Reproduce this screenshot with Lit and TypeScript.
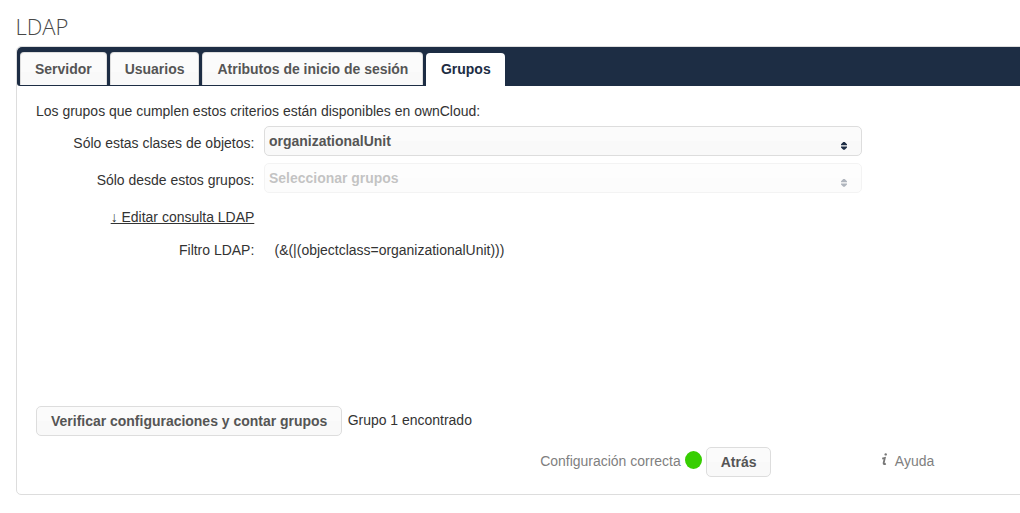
import { LitElement, html, css } from "lit";
import { customElement, property } from "lit/decorators.js";
import { classMap } from "lit/directives/class-map.js";

@customElement("multi-select")
class MultiSelect extends LitElement {
  @property() label = "";
  @property({ type: Boolean }) disabled = false;

  static styles = css`
    :host { display: block; }
    .box {
      box-sizing: border-box;
      width: 598px;
      height: 30px;
      display: flex;
      justify-content: space-between;
      padding: 0 13px 0 4px;
      border: 1px solid #ddd;
      border-radius: 5px;
      background: linear-gradient(#fbfbfb 50%, #f9f9f9 50%);
      color: #555;
      font-weight: bold;
      line-height: 28px;
    }
    .disabled { opacity: 0.35; }
    svg { display: block; margin-top: 15px; }
  `;

  render() {
    return html`
      <div class=${classMap({ box: true, disabled: this.disabled })}>
        <span>${this.label}</span>
        <svg width="7" height="8" viewBox="0 0 7 8" fill="#1d2d44">
          <path d="M2.3 0 H3.7 L6 2.3 V3.3 H0 V2.3 Z M0 4.5 H6 V5.5 L3.7 7.8 H2.3 L0 5.5 Z" />
        </svg>
      </div>
    `;
  }
}

@customElement("app-root")
class AppRoot extends LitElement {
  private tabs = ["Servidor", "Usuarios", "Atributos de inicio de sesión", "Grupos"];
  private active = "Grupos";

  static styles = css`
    :host {
      display: block;
      height: 513px;
      overflow: hidden;
      background: #fff;
      color: #333;
      font: 13.97px/20px "Liberation Sans", Arial, sans-serif;
    }
    h2 {
      margin: 0;
      padding: 11px 15.5px 5px;
      height: 30px;
      font: 300 22px/30px "Open Sans", sans-serif;
      color: #484848;
    }
    .panel {
      box-sizing: border-box;
      width: 1040px;
      height: 449px;
      margin-left: 16px;
      border: 1px solid #ddd;
      border-radius: 5px;
    }
    .tabs {
      box-sizing: border-box;
      display: flex;
      gap: 3px;
      height: 39px;
      padding: 5px 3px 1px;
      border-radius: 5px 5px 0 3px;
      background: #1d2d44;
    }
    .tab {
      box-sizing: border-box;
      height: 33px;
      padding: 0 14px;
      border: 1px solid #ddd;
      border-bottom: 0;
      border-radius: 4px 4px 0 0;
      background: linear-gradient(#fbfbfb 60%, #f9f9f9 60%);
      color: #555;
      font-weight: bold;
      line-height: 32px;
    }
    .active {
      height: 33px;
      margin-top: 1px;
      padding: 0 14px 0 14.6px;
      border: 0;
      background: #fff;
      color: #1d2d44;
    }
    .content { padding: 15px 19px 0; }
    .form {
      display: grid;
      grid-template-columns: 218.3px 1fr;
      grid-template-rows: 37px 37px 37px 29px;
      column-gap: 9.7px;
      margin-top: 5px;
    }
    .label { padding-top: 7px; text-align: right; }
    .link { text-decoration: underline; }
    .filter-label { padding-top: 3px; text-align: right; }
    .filter { padding: 3px 0 0 10.5px; }
    .verify { display: flex; gap: 5.3px; margin-top: 140px; }
    .found { padding-top: 4px; }
    .button {
      box-sizing: border-box;
      height: 30px;
      padding: 0 14px;
      border: 1px solid #ddd;
      border-radius: 5px;
      background: linear-gradient(#fbfbfb 50%, #f9f9f9 50%);
      color: #555;
      font-weight: bold;
      line-height: 28px;
    }
    .controls {
      display: flex;
      margin: 11px 0 0 504.2px;
      color: #7f7f7f;
    }
    .status { padding-top: 4px; }
    .dot {
      width: 17px;
      height: 18px;
      margin: 4px 4px 0;
      border-radius: 50%;
      background: #37ce02;
    }
    .help { display: flex; padding-top: 4px; margin-left: 110px; }
    .info { width: 13.4px; }
    .info svg { display: block; margin-top: 2px; }
  `;

  render() {
    return html`
      <h2>LDAP</h2>
      <div class="panel">
        <div class="tabs">
          ${this.tabs.map(
            (t) => html`<div class=${classMap({ tab: true, active: t === this.active })}>${t}</div>`
          )}
        </div>
        <div class="content">
          <div>Los grupos que cumplen estos criterios están disponibles en ownCloud:</div>
          <div class="form">
            <div class="label">Sólo estas clases de objetos:</div>
            <multi-select label="organizationalUnit"></multi-select>
            <div class="label">Sólo desde estos grupos:</div>
            <multi-select label="Seleccionar grupos" disabled></multi-select>
            <div class="label"><span class="link">↓ Editar consulta LDAP</span></div>
            <div></div>
            <div class="filter-label">Filtro LDAP:</div>
            <div class="filter">(&amp;(|(objectclass=organizationalUnit)))</div>
          </div>
          <div class="verify">
            <div class="button">Verificar configuraciones y contar grupos</div>
            <div class="found">Grupo 1 encontrado</div>
          </div>
          <div class="controls">
            <span class="status">Configuración correcta</span>
            <span class="dot"></span>
            <div class="button">Atrás</div>
            <div class="help">
              <span class="info">
                <svg width="7" height="13" viewBox="0 0 7 13" fill="none" stroke="#777">
                  <path d="M1.2 5.6 L3.8 4.9 L2.6 10.2 Q2.4 11.8 4.8 10.6" stroke-width="1.8" />
                  <circle cx="4.7" cy="1.4" r="1.2" fill="#777" stroke="none" />
                </svg>
              </span>
              <span>Ayuda</span>
            </div>
          </div>
        </div>
      </div>
    `;
  }
}
